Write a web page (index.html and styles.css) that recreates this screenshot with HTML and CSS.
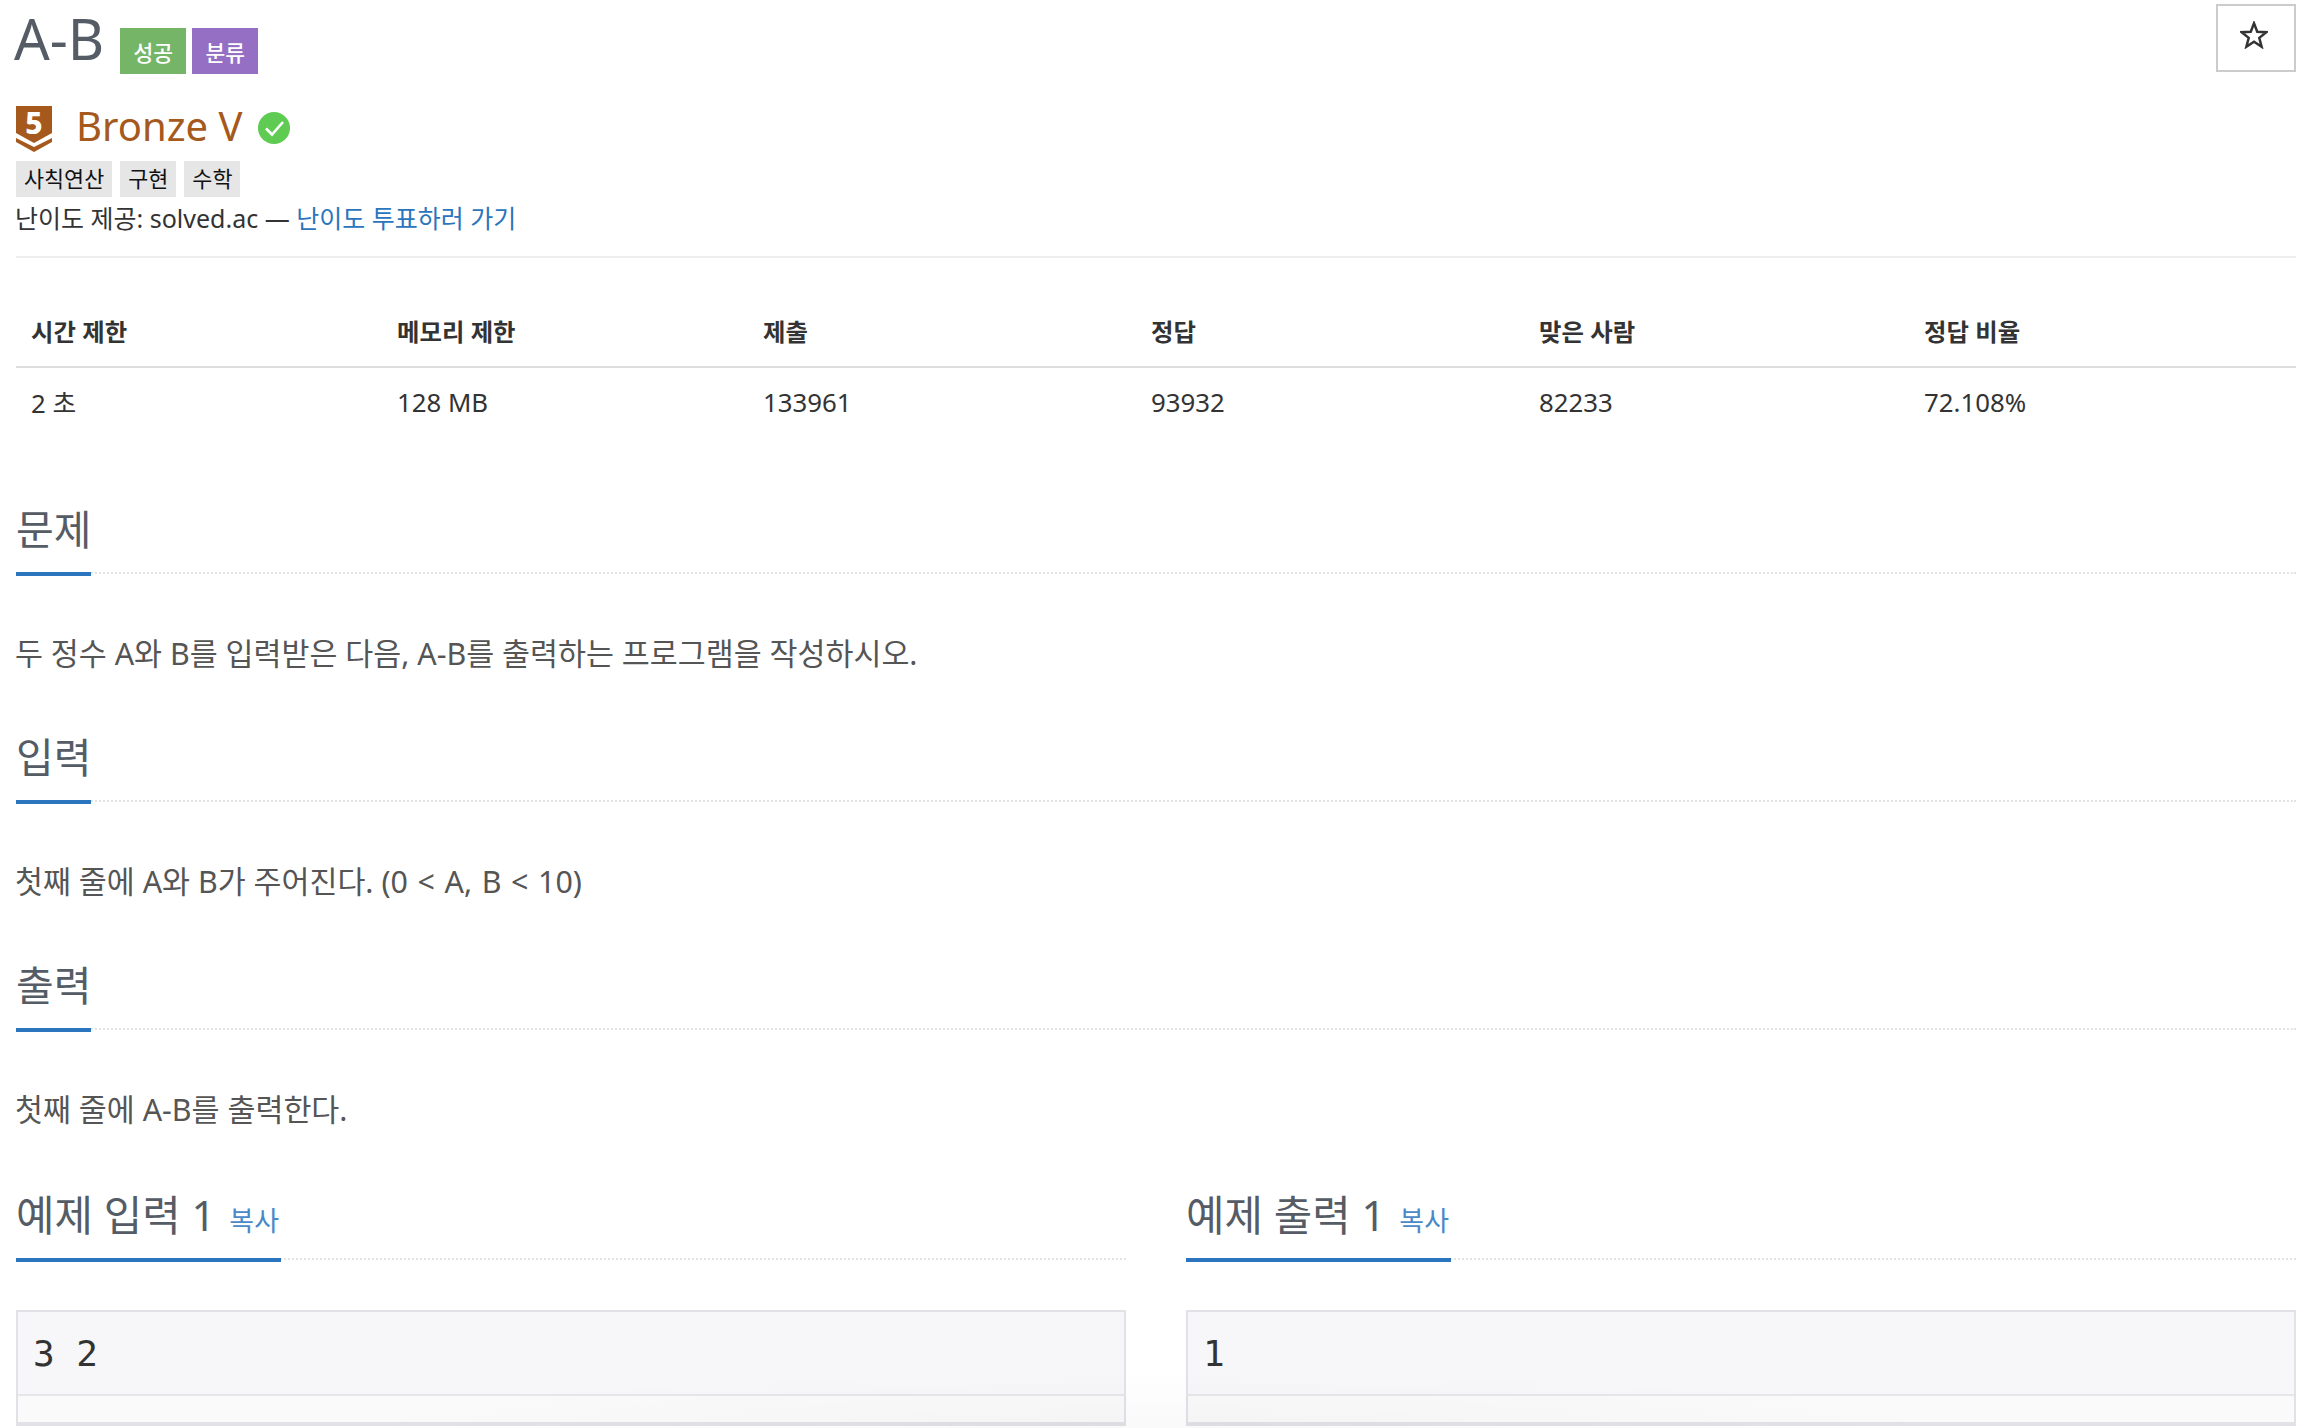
FILE: index.html
```html
<!DOCTYPE html>
<html lang="ko">
<head>
<meta charset="utf-8">
<title>A-B</title>
<link rel="stylesheet" href="styles.css">
</head>
<body>
<main class="page">
  <header class="title-row">
    <h1 class="title">A-B</h1>
    <span class="badge badge-green">성공</span>
    <span class="badge badge-purple">분류</span>
    <button class="star" type="button" aria-label="즐겨찾기">
      <svg viewBox="1.500 1.500 25 25" width="28" height="28"><path d="M14 3.500l2.900 7.600 8.100.4-6.300 5.100 2.100 7.900L14 20.100l-6.800 4.400 2.100-7.900L3 11.500l8.100-.4z" fill="none" stroke="#333" stroke-width="2.200"/></svg>
    </button>
  </header>
  <div class="tier-row">
    <div class="tier-icon">
      <svg viewBox="0 0 36 46" width="36" height="46"><path d="M0 0H36V27L18 37 0 27z" fill="#a5591c"/><path d="M0 32l18 9 18-9v4l-18 10-18-10z" fill="#a5591c"/></svg>
      <span class="tier-digit">5</span>
    </div>
    <span class="tier-name">Bronze V</span>
    <svg class="tier-check" viewBox="0 0 32 32" width="32" height="32"><circle cx="16" cy="16" r="16" fill="#5fcb52"/><path d="M8 16.500l6 6L25 10" fill="none" stroke="#fff" stroke-width="2.600"/></svg>
  </div>
  <ul class="tags">
    <li class="tag">사칙연산</li>
    <li class="tag">구현</li>
    <li class="tag">수학</li>
  </ul>
  <p class="credit">난이도 제공: solved.ac — <a href="#" class="link">난이도 투표하러 가기</a></p>
  <hr class="rule">
  <table class="info">
    <thead>
      <tr><th class="c1">시간 제한</th><th class="c2">메모리 제한</th><th class="c3">제출</th><th class="c4">정답</th><th class="c5">맞은 사람</th><th>정답 비율</th></tr>
    </thead>
    <tbody>
      <tr><td>2 초</td><td>128 MB</td><td>133961</td><td>93932</td><td>82233</td><td>72.108%</td></tr>
    </tbody>
  </table>
  <section class="section first">
    <div class="head"><h2 class="head-text">문제</h2></div>
    <p class="body-text">두 정수 A와 B를 입력받은 다음, A-B를 출력하는 프로그램을 작성하시오.</p>
  </section>
  <section class="section">
    <div class="head"><h2 class="head-text">입력</h2></div>
    <p class="body-text">첫째 줄에 A와 B가 주어진다. <span class="formula">(0 &lt; A, B &lt; 10)</span></p>
  </section>
  <section class="section">
    <div class="head"><h2 class="head-text">출력</h2></div>
    <p class="body-text">첫째 줄에 A-B를 출력한다.</p>
  </section>
  <div class="samples">
    <section class="sample">
      <div class="head"><h2 class="head-text">예제 입력 1 <a href="#" class="copy">복사</a></h2></div>
      <div class="code"><pre class="code-line">3 2</pre><div class="code-empty"></div></div>
    </section>
    <section class="sample">
      <div class="head"><h2 class="head-text">예제 출력 1 <a href="#" class="copy">복사</a></h2></div>
      <div class="code"><pre class="code-line">1</pre><div class="code-empty"></div></div>
    </section>
  </div>
</main>
<div class="bottom-fade"></div>
</body>
</html>
```
FILE: styles.css
```css
* { box-sizing: border-box; }
html, body { margin: 0; padding: 0; background: #fff; }
body {
  height: 1428px;
  overflow: hidden;
  position: relative;
  font-family: "Noto Sans", "Noto Sans CJK KR", sans-serif;
  color: #333;
}
.page { padding: 0 12px 0 16px; }
.title-row { display: flex; align-items: flex-start; height: 94px; }
.title {
  margin: 0 0 0 -2px;
  font-size: 56px;
  line-height: 76px;
  font-weight: 400;
  color: #555c66;
}
.badge {
  margin-top: 28px;
  height: 46px;
  width: 66px;
  display: flex;
  align-items: center;
  justify-content: center;
  color: #fff;
  font-size: 21.500px;
  font-weight: 500;
}
.badge-green { background: #75b568; margin-left: 16px; }
.badge-purple { background: #956fc4; margin-left: 6px; }
.star {
  margin-left: auto;
  width: 80px;
  height: 68px;
  margin-top: 4px;
  padding: 0 4px 7px 0;
  background: #fff;
  border: 2px solid #ccc;
  display: flex;
  align-items: center;
  justify-content: center;
}
.tier-row { display: flex; align-items: flex-start; height: 67px; }
.tier-icon { margin-top: 12px; position: relative; width: 36px; height: 46px; }
.tier-icon svg { display: block; }
.tier-digit {
  position: absolute;
  left: 0;
  top: 2px;
  width: 36px;
  text-align: center;
  font-size: 30px;
  line-height: 30px;
  font-weight: 800;
  color: #fff;
}
.tier-name {
  margin-left: 24px;
  font-size: 40px;
  line-height: 60px;
  margin-top: 2px;
  color: #a5591c;
}
.tier-check { margin-top: 18px; margin-left: 16px; }
.tags { display: flex; list-style: none; margin: 0; padding: 0; gap: 8px; }
.tag {
  height: 36px;
  padding: 0 8px;
  background: #e6e6e6;
  color: #111;
  font-size: 21.800px;
  line-height: 36px;
}
.credit { margin: 2px 0 0 -1px; font-size: 25px; line-height: 38px; color: #333; }
.link { color: #2a75bd; text-decoration: none; }
.rule { margin: 19px 0 0; border: 0; height: 2px; background: #eee; }
.info { width: 100%; border-collapse: collapse; margin-top: 47px; table-layout: fixed; font-size: 25.800px; }
.info th { text-align: left; padding: 0 15px 10px; height: 62px; font-weight: 700; font-size: 24.400px; border-bottom: 2px solid #ddd; }
.info td { padding: 0 15px; height: 68px; }
.c1 { width: 366px; }
.c2 { width: 366px; }
.c3 { width: 388px; }
.c4 { width: 388px; }
.c5 { width: 385px; }
.section { margin-top: 50px; }
.section.first { margin-top: 63px; }
.head { border-bottom: 2px dotted #e3e3e3; height: 76px; display: flex; }
.head-text {
  margin: 0;
  height: 78px;
  border-bottom: 4px solid #2a75bd;
  font-size: 41px;
  line-height: 62px;
  font-weight: 400;
  color: #555c66;
}
.body-text { margin: 58px 0 0 -1px; font-size: 30.400px; line-height: 44px; color: #555; }
.formula { word-spacing: 1.700px; }
.samples { display: grid; grid-template-columns: 1fr 1fr; gap: 60px; margin-top: 52px; }
.sample .head-text { font-size: 41.800px; }
.copy { font-size: 27px; color: #4a88c8; text-decoration: none; margin: 0 2px 0 3px; }
.code { margin-top: 50px; border: 2px solid #e1e1e8; border-bottom-width: 4px; background: #f7f7f9; }
.code-line {
  margin: 0;
  height: 84px;
  padding: 0 15px;
  font-family: "DejaVu Sans Mono", monospace;
  font-size: 36px;
  line-height: 84px;
  border-bottom: 2px solid #e6e6ea;
}
.code-empty { height: 26px; background: #fafafa; }
.bottom-fade {
  position: absolute;
  left: 0;
  right: 0;
  bottom: 0;
  height: 60px;
  pointer-events: none;
  background: radial-gradient(ellipse 36% 100% at 50% 100%, rgba(0,0,0,.025), rgba(0,0,0,0));
}
```
